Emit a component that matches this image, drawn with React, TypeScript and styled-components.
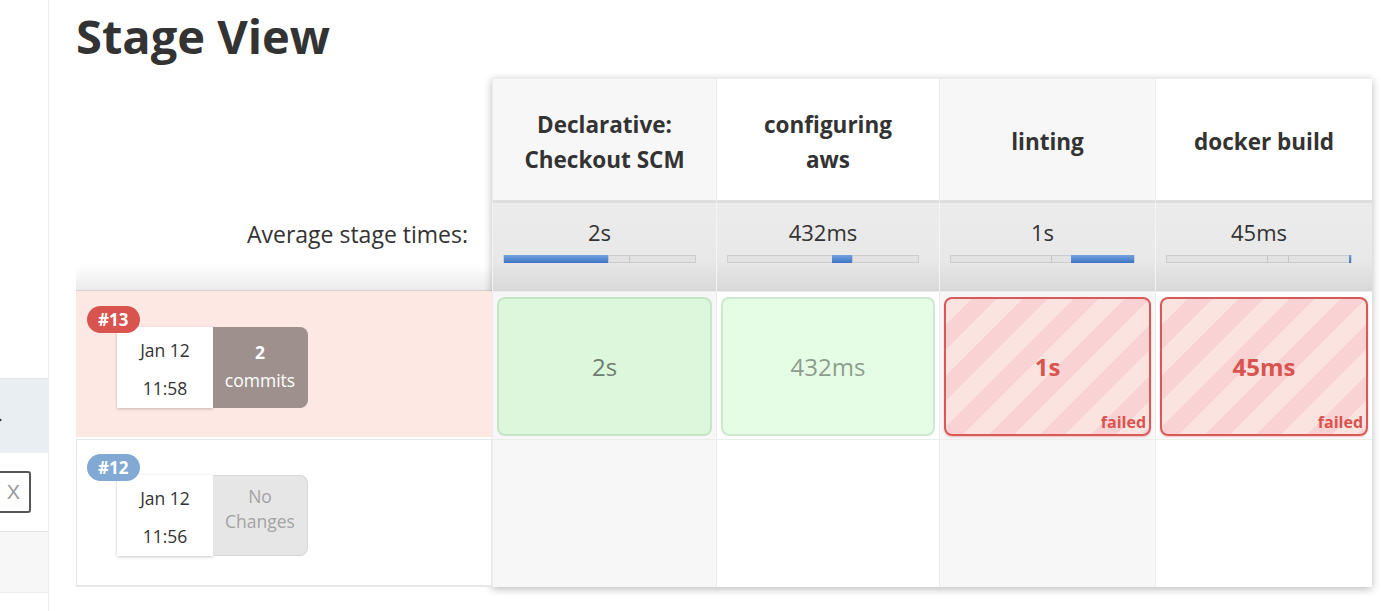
import styled, { createGlobalStyle } from "styled-components";

const GlobalStyle = createGlobalStyle`
  html, body {
    margin: 0;
    padding: 0;
    background: #fff;
  }
  body {
    font-family: "Open Sans", "Noto Sans", "Liberation Sans", sans-serif;
    color: #333;
  }
`;

const Page = styled.div`
  display: flex;
  min-height: 611px;
  overflow: hidden;
`;

const Sidebar = styled.div`
  width: 49px;
  flex-shrink: 0;
  border-right: 1px solid #ececec;
  display: flex;
  flex-direction: column;
  padding-top: 378px;
  box-sizing: border-box;
`;

const SideItem = styled.div<{ $active?: boolean }>`
  height: 73px;
  display: flex;
  align-items: center;
  background: ${(p) => (p.$active ? "#e9eef2" : "#f7f7f7")};
  border-top: 1px solid #e6e6e6;
  border-bottom: 1px solid ${(p) => (p.$active ? "#e9eef2" : "#ececec")};
`;

const SideGrey = styled(SideItem)`
  height: 60px;
  margin-top: 18px;
`;

const SearchBox = styled.div`
  margin: 18px 0 0 -22px;
  width: 53px;
  height: 42px;
  box-sizing: border-box;
  border: 2px solid #555;
  border-radius: 3px;
  display: flex;
  align-items: center;
  justify-content: flex-end;
  padding-right: 9px;
  color: #9a9a9a;
  font-family: "Liberation Sans", sans-serif;
  font-size: 20px;
`;

const Main = styled.div`
  flex: 1;
  padding: 8px 0 0 27px;
`;

const Title = styled.h1`
  margin: 0;
  font-size: 47px;
  line-height: 56px;
  font-weight: 700;
  color: #333;
`;

const Table = styled.div`
  display: flex;
  margin-top: 14px;
`;

const LeftColumn = styled.div`
  width: 416px;
  display: flex;
  flex-direction: column;
`;

const LeftHead = styled.div`
  height: 122px;
`;

const AvgLabel = styled.div`
  height: 91px;
  display: flex;
  align-items: center;
  justify-content: flex-end;
  padding: 0 24px 22px 0;
  box-sizing: border-box;
  font-size: 23px;
  background: linear-gradient(#fff 0%, #fff 72%, #ebebeb 100%);
  border-bottom: 1px solid #d2d2d2;
`;

const BuildRow = styled.div<{ $failed: boolean }>`
  position: relative;
  height: 148px;
  box-sizing: border-box;
  padding: 35px 0 0 40px;
  background: ${(p) => (p.$failed ? "#fee8e4" : "#fff")};
  border: 1px solid ${(p) => (p.$failed ? "#fee8e4" : "#e6e6e6")};
  border-bottom: 2px solid ${(p) => (p.$failed ? "#fff" : "#e6e6e6")};
`;

const Badge = styled.span<{ $failed: boolean }>`
  position: absolute;
  top: 14px;
  left: 10px;
  z-index: 1;
  height: 27px;
  line-height: 27px;
  padding: 0 12px 0 11px;
  border-radius: 14px;
  background: ${(p) => (p.$failed ? "#d9534f" : "#81a9d3")};
  color: #fff;
  font-size: 17px;
  font-weight: 700;
`;

const RunCard = styled.div`
  display: flex;
  height: 81px;
`;

const DateBox = styled.div`
  width: 96px;
  background: #fff;
  box-shadow: 0 1px 3px rgba(0, 0, 0, 0.22);
  display: flex;
  flex-direction: column;
  align-items: center;
  padding-top: 4px;
  box-sizing: border-box;
  font-size: 17.5px;
  line-height: 38px;
`;

const ChangesBox = styled.div<{ $empty: boolean }>`
  width: 95px;
  box-sizing: border-box;
  border-radius: 0 8px 8px 0;
  display: flex;
  flex-direction: column;
  align-items: center;
  font-size: 17.5px;
  padding-top: ${(p) => (p.$empty ? "8px" : "10px")};
  line-height: ${(p) => (p.$empty ? "25px" : "28px")};
  background: ${(p) => (p.$empty ? "#e6e6e6" : "#9e918d")};
  color: ${(p) => (p.$empty ? "#a3a3a3" : "#fff")};
  border: 1px solid ${(p) => (p.$empty ? "#d8d8d8" : "#9e918d")};
  border-left: none;
`;

const Strong = styled.span`
  font-weight: 700;
`;

const StageGrid = styled.div`
  display: flex;
  box-shadow: 0 2px 8px rgba(0, 0, 0, 0.28);
  border-top: 1px solid #ececec;
`;

const StageColumn = styled.div<{ $w: number }>`
  width: ${(p) => p.$w}px;
  display: flex;
  flex-direction: column;
  border-left: 1px solid #ececec;
  box-sizing: border-box;
`;

const HeadCell = styled.div<{ $alt: boolean }>`
  height: 124px;
  display: flex;
  align-items: center;
  justify-content: center;
  text-align: center;
  padding: 4px 10px 0;
  box-sizing: border-box;
  font-size: 22.5px;
  font-weight: 700;
  line-height: 35px;
  background: ${(p) => (p.$alt ? "#f7f7f7" : "#fff")};
  border-bottom: 3px solid #dedede;
`;

const HeadText = styled.span`
  max-width: 172px;
`;

const AvgCell = styled.div`
  height: 88px;
  box-sizing: border-box;
  padding: 14px 20px 0 10px;
  display: flex;
  flex-direction: column;
  background: linear-gradient(#ececec 0%, #e8e8e8 65%, #d8d8d8 100%);
  border-left: 1px solid #f4f4f4;
  margin-left: -1px;
`;

const AvgTime = styled.div`
  text-align: center;
  font-size: 22px;
  line-height: 30px;
`;

const Bar = styled.div`
  position: relative;
  margin-top: 8px;
  height: 8px;
  box-sizing: border-box;
  background: #e2e2e2;
  border: 1px solid #cdcdcd;
`;

const Tick = styled.span`
  position: absolute;
  top: 0;
  bottom: 0;
  width: 1px;
  background: #c4c4c4;
`;

const Fill = styled.span`
  position: absolute;
  top: -1px;
  bottom: -1px;
  background: linear-gradient(#74a2e0, #3f74c4);
`;

const BuildCell = styled.div<{ $alt: boolean }>`
  height: 148px;
  box-sizing: border-box;
  padding: 5px 4px 3px 4px;
  background: ${(p) => (p.$alt ? "#f7f7f7" : "#fff")};
  border-top: 1px solid #ececec;
  display: flex;
`;

const StageCard = styled.div<{ $tone: "dark" | "light" | "failed" }>`
  position: relative;
  flex: 1;
  border-radius: 8px;
  display: flex;
  align-items: center;
  justify-content: center;
  font-size: 24px;
  ${(p) =>
    p.$tone === "failed"
      ? `
    border: 2px solid #d75a58;
    color: #d9534f;
    font-weight: 700;
    background: repeating-linear-gradient(135deg, #fbe3e0 0 18px, #f9d3d3 18px 36px);
    box-shadow: 0 1px 2px rgba(217, 83, 79, 0.35);
  `
      : p.$tone === "dark"
      ? `
    border: 2px solid #c6e4c6;
    color: #6f7f6f;
    background: #dcf7dc;
  `
      : `
    border: 2px solid #cfe9cf;
    color: #8d9d8d;
    background: #e5fde5;
  `}
`;

const FailedTag = styled.span`
  position: absolute;
  right: 3px;
  bottom: 1px;
  font-size: 16px;
  font-weight: 700;
`;

type Tone = "dark" | "light" | "failed";

interface Stage {
  name: string;
  width: number;
  avg: string;
  fill: [number, number];
  run: { time: string; tone: Tone };
}

const stages: Stage[] = [
  { name: "Declarative: Checkout SCM", width: 224, avg: "2s", fill: [0, 54.5], run: { time: "2s", tone: "dark" } },
  { name: "configuring aws", width: 223, avg: "432ms", fill: [54.5, 65.5], run: { time: "432ms", tone: "light" } },
  { name: "linting", width: 216, avg: "1s", fill: [65.5, 100], run: { time: "1s", tone: "failed" } },
  { name: "docker build", width: 217, avg: "45ms", fill: [99, 100], run: { time: "45ms", tone: "failed" } },
];

const builds = [
  { id: "#13", date: "Jan 12", time: "11:58", failed: true, changes: ["2", "commits"] },
  { id: "#12", date: "Jan 12", time: "11:56", failed: false, changes: null },
];

const Arrow = () => (
  <svg width="6" height="10" viewBox="0 0 6 10" style={{ marginLeft: -2, marginTop: 8 }}>
    <path d="M0 2 L4 5 L0 8 Z" fill="#333" />
  </svg>
);

const App = () => {
  return (
    <>
      <GlobalStyle />
      <Page>
        <Sidebar>
          <SideItem $active>
            <Arrow />
          </SideItem>
          <SearchBox>X</SearchBox>
          <SideGrey />
        </Sidebar>
        <Main>
          <Title>Stage View</Title>
          <Table>
            <LeftColumn>
              <LeftHead />
              <AvgLabel>Average stage times:</AvgLabel>
              {builds.map((b) => (
                <BuildRow key={b.id} $failed={b.failed}>
                  <Badge $failed={b.failed}>{b.id}</Badge>
                  <RunCard>
                    <DateBox>
                      <span>{b.date}</span>
                      <span>{b.time}</span>
                    </DateBox>
                    {b.changes ? (
                      <ChangesBox $empty={false}>
                        <Strong>{b.changes[0]}</Strong>
                        <span>{b.changes[1]}</span>
                      </ChangesBox>
                    ) : (
                      <ChangesBox $empty>
                        <span>No</span>
                        <span>Changes</span>
                      </ChangesBox>
                    )}
                  </RunCard>
                </BuildRow>
              ))}
            </LeftColumn>
            <StageGrid>
              {stages.map((s, i) => (
                <StageColumn key={s.name} $w={s.width}>
                  <HeadCell $alt={i % 2 === 0}>
                    <HeadText>{s.name}</HeadText>
                  </HeadCell>
                  <AvgCell>
                    <AvgTime>{s.avg}</AvgTime>
                    <Bar>
                      <Tick style={{ left: "54.5%" }} />
                      <Tick style={{ left: "65.5%" }} />
                      <Fill
                        style={{
                          left: `${s.fill[0]}%`,
                          width: `${s.fill[1] - s.fill[0]}%`,
                        }}
                      />
                    </Bar>
                  </AvgCell>
                  <BuildCell $alt={i % 2 === 0}>
                    <StageCard $tone={s.run.tone}>
                      {s.run.time}
                      {s.run.tone === "failed" && <FailedTag>failed</FailedTag>}
                    </StageCard>
                  </BuildCell>
                  <BuildCell $alt={i % 2 === 0} />
                </StageColumn>
              ))}
            </StageGrid>
          </Table>
        </Main>
      </Page>
    </>
  );
};

export default App;
